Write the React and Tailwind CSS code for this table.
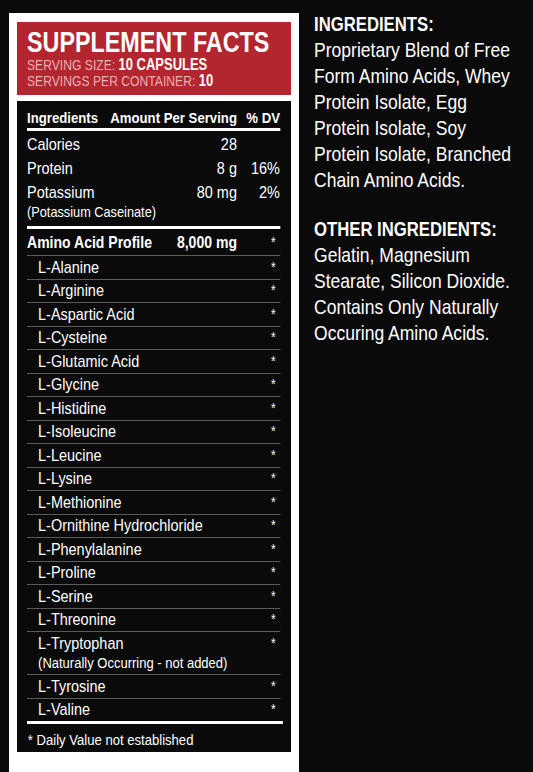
import React from 'react';

const aminos = [
  'L-Alanine',
  'L-Arginine',
  'L-Aspartic Acid',
  'L-Cysteine',
  'L-Glutamic Acid',
  'L-Glycine',
  'L-Histidine',
  'L-Isoleucine',
  'L-Leucine',
  'L-Lysine',
  'L-Methionine',
  'L-Ornithine Hydrochloride',
  'L-Phenylalanine',
  'L-Proline',
  'L-Serine',
  'L-Threonine',
];

// Liberation Sans squeezed horizontally to stand in for a condensed grotesk
const Star = () => <span className="text-[14px] pr-[5px]">*</span>;

const AminoRow = ({ name }) => (
  <div className="h-[23.5px] border-t border-[#5a5a5a] flex items-center">
    <span className="flex-1 pl-[13px]">{name}</span>
    <Star />
  </div>
);

const FactsPanel = () => (
  <div className="bg-white w-[290px] pt-[9px] pl-[8px] pr-[8px] pb-[7px] shrink-0">
    {/* red header */}
    <div className="bg-[#b3262f] h-[73px] pl-[10px] pt-[7px] text-white overflow-hidden">
      <div className="w-[326px] origin-left scale-x-[0.81] whitespace-nowrap">
        <h1 className="text-[28.8px] leading-[26px] font-bold">SUPPLEMENT FACTS</h1>
        <div className="mt-[2px] text-[15px] leading-[16px] text-[#eab0b4]">
          <p>
            SERVING SIZE: <span className="font-bold text-white text-[16px]">10 CAPSULES</span>
          </p>
          <p>
            SERVINGS PER CONTAINER: <span className="font-bold text-white text-[16px]">10</span>
          </p>
        </div>
      </div>
    </div>

    {/* table */}
    <div className="bg-[#0a0a0a] mt-[6px] pl-[10px] pr-[11px] pt-[7px] pb-[2px] text-white text-[17px]">
      <div className="w-[297.6px] origin-left scale-x-[0.85] whitespace-nowrap">
        <div className="flex h-[20px] items-center font-bold text-[15.5px]">
          <span className="flex-1">Ingredients</span>
          <span>Amount Per Serving</span>
          <span className="w-[50.6px] text-right">% DV</span>
        </div>
        <div className="h-[3px] bg-white" />

        <div className="mt-[2px]">
          <div className="flex h-[24px] items-center">
            <span className="flex-1">Calories</span>
            <span>28</span>
            <span className="w-[50.6px]" />
          </div>
          <div className="flex h-[24px] items-center">
            <span className="flex-1">Protein</span>
            <span>8 g</span>
            <span className="w-[50.6px] text-right">16%</span>
          </div>
          <div className="flex h-[23px] items-center">
            <span className="flex-1">Potassium</span>
            <span>80 mg</span>
            <span className="w-[50.6px] text-right">2%</span>
          </div>
          <div className="h-[16px] leading-[16px] text-[15px]">(Potassium Caseinate)</div>
        </div>
        <div className="h-[3px] bg-white mt-[6px]" />

        <div className="flex h-[26px] items-center font-bold text-[16.5px]">
          <span className="flex-1">Amino Acid Profile</span>
          <span>8,000 mg</span>
          <span className="w-[50.6px] text-right font-normal text-[17px]">
            <Star />
          </span>
        </div>

        {aminos.map((a) => (
          <AminoRow key={a} name={a} />
        ))}

        <div className="border-t border-[#5a5a5a] pb-[3px]">
          <div className="flex h-[23px] items-center">
            <span className="flex-1 pl-[13px]">L-Tryptophan</span>
            <Star />
          </div>
          <div className="h-[16px] leading-[16px] pl-[13px] text-[15.3px]">(Naturally Occurring - not added)</div>
        </div>
        <AminoRow name="L-Tyrosine" />
        <AminoRow name="L-Valine" />

        <div className="h-[3px] bg-white -mr-[3.5px]" />
        <div className="h-[20px] mt-[6px] flex items-center text-[15.4px] pl-[1px]">* Daily Value not established</div>
      </div>
    </div>
  </div>
);

const App = () => {
  return (
    <div className="min-h-[772px] w-[533px] bg-[#0a0a0a] text-white font-['Liberation_Sans',Arial,sans-serif] flex pt-[13px] pl-[9px] overflow-hidden">
      <FactsPanel />
      <div className="ml-[15px] -mt-[2px] w-[262px] shrink-0 origin-left scale-x-[0.835] whitespace-nowrap text-[21px] leading-[26px]">
        <h2 className="font-bold text-[20px]">INGREDIENTS:</h2>
        <p>
          Proprietary Blend of Free
          <br />
          Form Amino Acids, Whey
          <br />
          Protein Isolate, Egg
          <br />
          Protein Isolate, Soy
          <br />
          Protein Isolate, Branched
          <br />
          Chain Amino Acids.
        </p>
        <h2 className="font-bold text-[20px] mt-[23px]">OTHER INGREDIENTS:</h2>
        <p>
          Gelatin, Magnesium
          <br />
          Stearate, Silicon Dioxide.
          <br />
          Contains Only Naturally
          <br />
          Occuring Amino Acids.
        </p>
      </div>
    </div>
  );
};

export default App;
